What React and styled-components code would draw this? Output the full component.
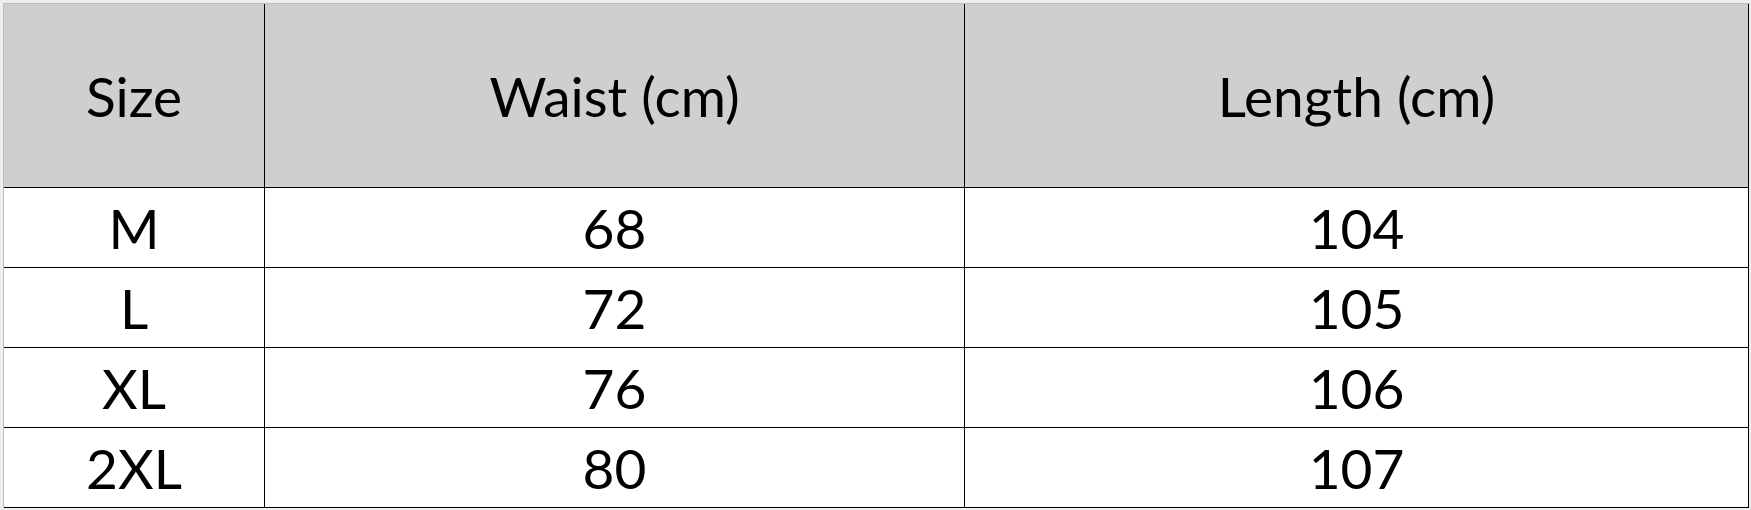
import React from 'react';
import styled, { createGlobalStyle } from 'styled-components';

const GlobalStyle = createGlobalStyle`
  html, body { margin: 0; padding: 0; background: #efefef; }
  body { font-family: Lato, "Open Sans", sans-serif; }
`;

const Sheet = styled.div`
  width: 1751px; height: 510px; box-sizing: border-box; padding: 3px 0 0 3px;
  background: #efefef; overflow: hidden;
`;

const Table = styled.div`
  display: grid;
  grid-template-columns: 261px 700px 784px;
  grid-template-rows: 184px repeat(4, 80px);
  width: 1746px;
  border-top: 1px solid #bdbdbd;
  border-left: 1px solid #bdbdbd;
`;

const Cell = styled.div`
  display: flex; align-items: center; justify-content: center;
  background: ${(p) => (p.$head ? '#d0cecf' : '#ffffff')};
  border-right: 1px solid #000;
  border-bottom: 1px solid #000;
  font-size: 55px; color: #000; line-height: normal;
  white-space: nowrap;
`;

const head = ['Size', 'Waist (cm)', 'Length (cm)'];
const rows = [
  ['M', '68', '104'],
  ['L', '72', '105'],
  ['XL', '76', '106'],
  ['2XL', '80', '107'],
];

export default function App() {
  return (
    <>
      <GlobalStyle />
      <Sheet>
        <Table>
          {head.map((h) => (
            <Cell key={h} $head>{h}</Cell>
          ))}
          {rows.map((r) =>
            r.map((v, i) => <Cell key={r[0] + i}>{v}</Cell>)
          )}
        </Table>
      </Sheet>
    </>
  );
}
